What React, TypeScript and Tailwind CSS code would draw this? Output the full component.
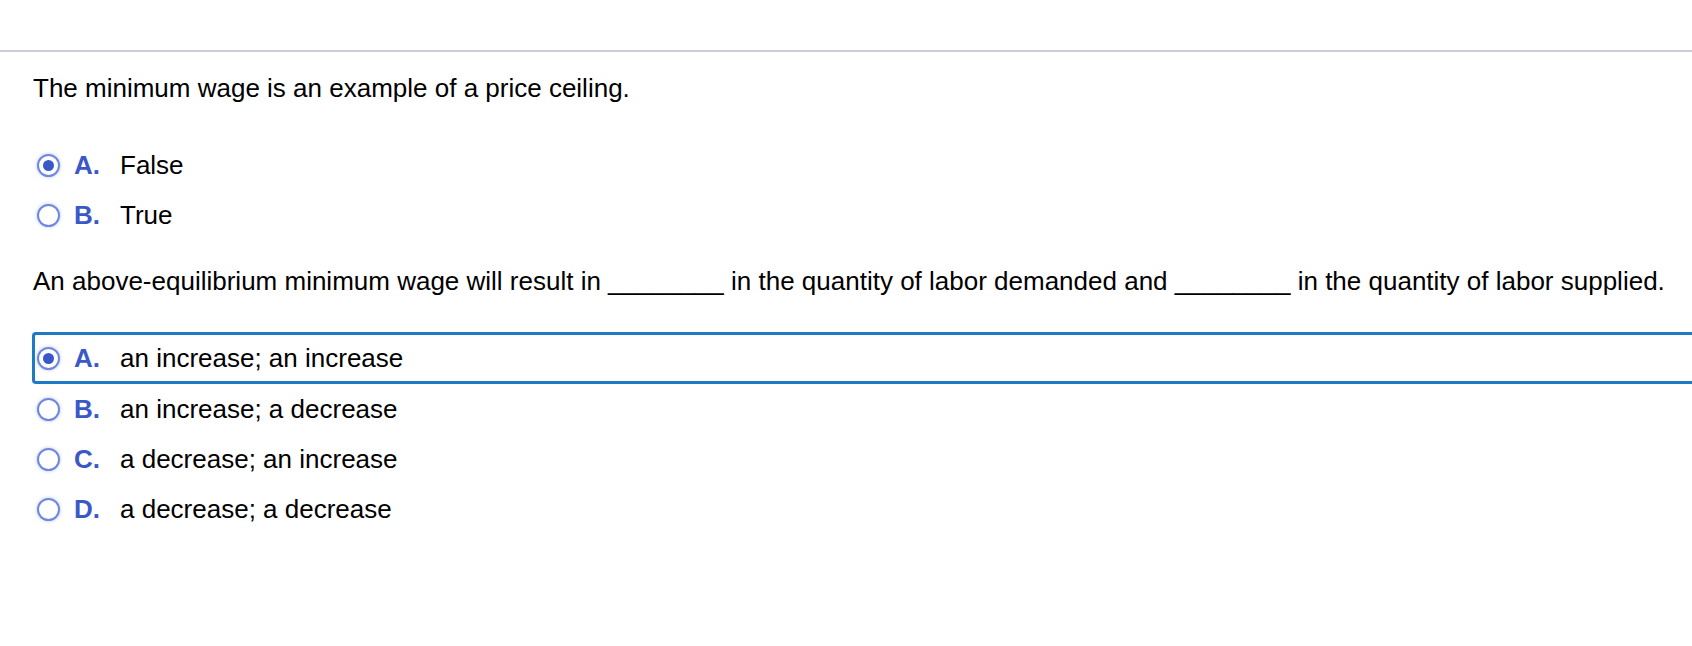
const font = { fontFamily: '"Liberation Sans", Arial, Helvetica, sans-serif' };

type Opt = { letter: string; text: string; checked?: boolean; focused?: boolean };

const q1: Opt[] = [
  { letter: "A.", text: "False", checked: true },
  { letter: "B.", text: "True" },
];

const q2: Opt[] = [
  { letter: "A.", text: "an increase; an increase", checked: true, focused: true },
  { letter: "B.", text: "an increase; a decrease" },
  { letter: "C.", text: "a decrease; an increase" },
  { letter: "D.", text: "a decrease; a decrease" },
];

function Radio({ checked }: { checked?: boolean }) {
  return (
    <span className="flex h-[23px] w-[23px] shrink-0 items-center justify-center rounded-full border-2 border-[#6f88de] bg-white shadow-[0_0_3px_1px_rgba(120,145,225,0.3)]">
      {checked && <span className="h-[11px] w-[11px] rounded-full bg-[#3b58c9]" />}
    </span>
  );
}

function Choice({ opt }: { opt: Opt }) {
  if (opt.focused) {
    return (
      <div className="ml-[32px] flex h-[52px] items-center rounded-l-[4px] border-[3px] border-r-0 border-[#1f7ac5] pl-[2px]">
        <Radio checked={opt.checked} />
        <span className="ml-[14px] w-[46px] font-bold text-[#3a59c7]">{opt.letter}</span>
        <span>{opt.text}</span>
      </div>
    );
  }
  return (
    <div className="ml-[37px] flex h-[50px] items-center">
      <Radio checked={opt.checked} />
      <span className="ml-[14px] w-[46px] font-bold text-[#3a59c7]">{opt.letter}</span>
      <span>{opt.text}</span>
    </div>
  );
}

export default function App() {
  return (
    <div className="min-h-[646px] w-full overflow-hidden bg-white text-[26px] leading-[30px] text-black" style={font}>
      <div className="h-[50px]" />
      <div className="h-[2px] bg-[#c9cddc]" />

      <p className="mt-[21px] pl-[33px]">The minimum wage is an example of a price ceiling.</p>

      <div className="mt-[37px]">
        {q1.map((o) => (
          <Choice key={o.letter} opt={o} />
        ))}
      </div>

      <p className="mt-[26px] whitespace-nowrap pl-[33px]">
        An above-equilibrium minimum wage will result in ________ in the quantity of labor demanded and ________ in the
        quantity of labor supplied.
      </p>

      <div className="mt-[36px]">
        {q2.map((o) => (
          <Choice key={o.letter} opt={o} />
        ))}
      </div>
    </div>
  );
}
